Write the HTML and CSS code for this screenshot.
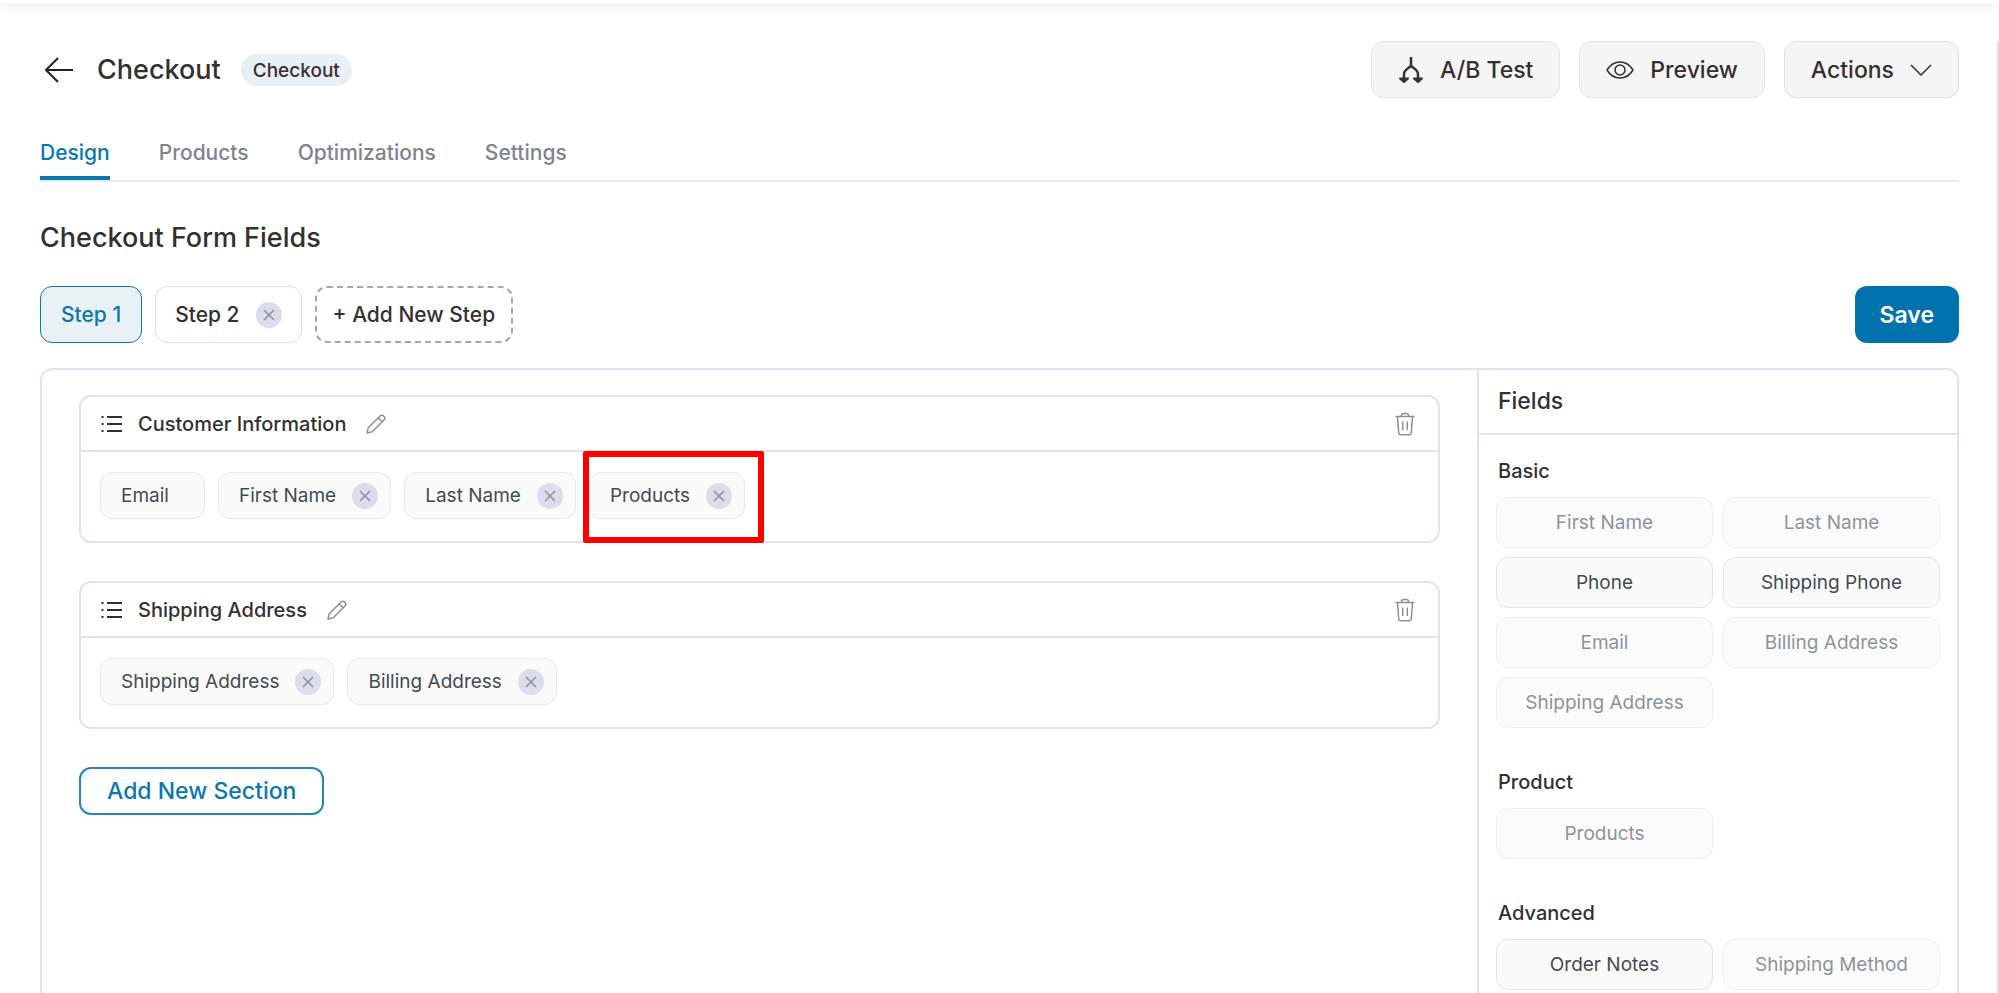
FILE: index.html
```html
<!DOCTYPE html>
<html lang="en">
<head>
<meta charset="UTF-8">
<meta name="viewport" content="width=device-width, initial-scale=1.0">
<title>Checkout</title>
<link rel="stylesheet" href="styles.css">
</head>
<body>
    <svg class="sprite" aria-hidden="true">
        <symbol id="close" viewBox="0 0 12 12"><path d="M1 1l10 10M11 1L1 11"/></symbol>
        <symbol id="list" viewBox="0 0 22 18">
            <path d="M6 2h15M6 9h15M6 16h15"/>
            <path d="M0.5 2h2M0.5 9h2M0.5 16h2"/>
        </symbol>
        <symbol id="pencil" viewBox="0 0 20 20">
            <path d="M1 19l1.200-5.200L13.800 2.200a2.800 2.800 0 0 1 4 4L6.200 17.800zM12.200 3.800l4 4"/>
        </symbol>
        <symbol id="trash" viewBox="0 0 20 24">
            <path d="M0.500 4.500h19M6.500 4.500V3.500a2 2 0 0 1 2-2h3a2 2 0 0 1 2 2v1M2.500 4.500l1.200 16a2.500 2.500 0 0 0 2.500 2.300h7.600a2.500 2.500 0 0 0 2.500-2.300l1.200-16M7.700 9.500v8.500M12.300 9.500v8.500"/>
        </symbol>
    </svg>

    <div class="topbar"></div>
    <div class="page">
        <header class="header">
            <button type="button" class="back" aria-label="Back">
                <svg width="30" height="26" viewBox="0 0 30 26"><path d="M29 13H2M14 1L2 13l12 12"/></svg>
            </button>
            <h1>Checkout</h1>
            <span class="badge">Checkout</span>
            <div class="actions">
                <button type="button" class="btn">
                    <svg class="icon-split" width="26" height="28" viewBox="0 0 26 28">
                        <path d="M13 1v9M13 9.500c-1 2.500-7 3.500-7 8.500v7M13 9.500c1 2.500 7 3.500 7 8.500v7"/>
                        <path d="M2 22.500L6 26l4-3.500zM16 22.500L20 26l4-3.500z"/>
                    </svg>
                    A/B Test
                </button>
                <button type="button" class="btn">
                    <svg width="28" height="20" viewBox="0 0 28 20">
                        <path d="M1 10C4 5 8.500 2 14 2s10 3 13 8c-3 5-7.500 8-13 8S4 15 1 10z"/>
                        <circle cx="14" cy="10" r="5"/>
                    </svg>
                    Preview
                </button>
                <button type="button" class="btn btn-menu">
                    Actions
                    <svg width="22" height="12" viewBox="0 0 22 12"><path d="M1 1l10 10L21 1"/></svg>
                </button>
            </div>
        </header>

        <nav class="tabs">
            <a href="#design" class="active">Design</a>
            <a href="#products">Products</a>
            <a href="#optimizations">Optimizations</a>
            <a href="#settings">Settings</a>
        </nav>

        <h2>Checkout Form Fields</h2>

        <div class="steps">
            <button type="button" class="step current">Step 1</button>
            <div class="step">
                Step 2
                <button type="button" class="remove" aria-label="Remove Step 2"><svg><use href="#close"/></svg></button>
            </div>
            <button type="button" class="step add-step">+ Add New Step</button>
            <button type="button" class="save">Save</button>
        </div>

        <div class="builder">
            <main class="sections">
                <section class="section">
                    <div class="section-head">
                        <svg class="icon-list"><use href="#list"/></svg>
                        <h3>Customer Information</h3>
                        <button type="button" class="icon-btn" aria-label="Edit"><svg class="icon-pencil"><use href="#pencil"/></svg></button>
                        <button type="button" class="icon-btn delete" aria-label="Delete"><svg class="icon-trash"><use href="#trash"/></svg></button>
                    </div>
                    <div class="chips">
                        <div class="chip locked">Email</div>
                        <div class="chip">First Name
                            <button type="button" class="remove" aria-label="Remove First Name"><svg><use href="#close"/></svg></button>
                        </div>
                        <div class="chip">Last Name
                            <button type="button" class="remove" aria-label="Remove Last Name"><svg><use href="#close"/></svg></button>
                        </div>
                        <div class="chip highlight">Products
                            <button type="button" class="remove" aria-label="Remove Products"><svg><use href="#close"/></svg></button>
                        </div>
                    </div>
                </section>

                <section class="section">
                    <div class="section-head">
                        <svg class="icon-list"><use href="#list"/></svg>
                        <h3>Shipping Address</h3>
                        <button type="button" class="icon-btn" aria-label="Edit"><svg class="icon-pencil"><use href="#pencil"/></svg></button>
                        <button type="button" class="icon-btn delete" aria-label="Delete"><svg class="icon-trash"><use href="#trash"/></svg></button>
                    </div>
                    <div class="chips">
                        <div class="chip">Shipping Address
                            <button type="button" class="remove" aria-label="Remove Shipping Address"><svg><use href="#close"/></svg></button>
                        </div>
                        <div class="chip">Billing Address
                            <button type="button" class="remove" aria-label="Remove Billing Address"><svg><use href="#close"/></svg></button>
                        </div>
                    </div>
                </section>

                <button type="button" class="add-section">Add New Section</button>
            </main>

            <aside class="fields">
                <h3 class="fields-title">Fields</h3>
                <div class="group">
                    <h4>Basic</h4>
                    <div class="field-grid">
                        <button type="button" disabled>First Name</button>
                        <button type="button" disabled>Last Name</button>
                        <button type="button">Phone</button>
                        <button type="button">Shipping Phone</button>
                        <button type="button" disabled>Email</button>
                        <button type="button" disabled>Billing Address</button>
                        <button type="button" disabled>Shipping Address</button>
                    </div>
                </div>
                <div class="group">
                    <h4>Product</h4>
                    <div class="field-grid">
                        <button type="button" disabled>Products</button>
                    </div>
                </div>
                <div class="group">
                    <h4>Advanced</h4>
                    <div class="field-grid">
                        <button type="button">Order Notes</button>
                        <button type="button" disabled>Shipping Method</button>
                    </div>
                </div>
            </aside>
        </div>
    </div>
</body>
</html>
```

FILE: styles.css
```css
* {
    box-sizing: border-box;
}

body {
    margin: 0;
    height: 100vh;
    overflow: hidden;
    display: flex;
    flex-direction: column;
    font-family: Inter, "Liberation Sans", sans-serif;
    font-size: 19px;
    color: #353030;
    background-color: #fff;
}

h1, h2, h3, h4 {
    margin: 0;
    font-weight: 500;
}

button {
    font: inherit;
    color: inherit;
    padding: 0;
    background: none;
    border: none;
    cursor: pointer;
}

svg {
    display: block;
    flex: none;
    fill: none;
    stroke: currentColor;
    stroke-width: 1.5;
    stroke-linejoin: round;
}

.sprite {
    position: absolute;
    width: 0;
    height: 0;
}

.topbar {
    flex: none;
    height: 3px;
    background-color: #fff;
    box-shadow: 0 1px 10px rgba(0, 0, 0, 0.18);
}

.page {
    flex: 1;
    min-height: 0;
    display: flex;
    flex-direction: column;
    margin-top: 38px;
    padding: 0 38px 0 40px;
    border-right: 2px solid #e2e2e4;
}

.header {
    display: flex;
    align-items: center;
}

.back {
    margin: 0 23px 0 4px;
    color: #222;
}

.back svg {
    stroke-width: 2;
}

h1, h2 {
    font-size: 27px;
    line-height: 34px;
}

.badge {
    margin-left: 20px;
    padding: 5px 12px 3px;
    line-height: 24px;
    font-weight: 500;
    border-radius: 16px;
    background-color: #eaeff3;
}

.actions {
    display: flex;
    gap: 19px;
    margin-left: auto;
}

.btn {
    display: flex;
    align-items: center;
    gap: 16px;
    height: 57px;
    padding: 0 26px;
    font-size: 23px;
    font-weight: 500;
    border: 1px solid #e6e6e8;
    border-radius: 12px;
    background-color: #f5f5f5;
}

.btn-menu {
    border-color: #dedcec;
}

.icon-split {
    stroke-width: 2.5;
}

.icon-split path:last-child {
    fill: currentColor;
    stroke-width: 2;
}

.tabs {
    display: flex;
    gap: 49px;
    margin-top: 42px;
    border-bottom: 2px solid #e8e8f0;
}

.tabs a {
    padding-bottom: 10px;
    font-size: 21px;
    font-weight: 500;
    line-height: 26px;
    color: #82828f;
    text-decoration: none;
    border-bottom: 4px solid transparent;
}

.tabs .active {
    color: #0a78ae;
    border-color: #0a78ae;
}

h2 {
    margin-top: 39px;
}

.steps {
    display: flex;
    gap: 13px;
    margin-top: 31px;
}

.step {
    display: flex;
    align-items: center;
    gap: 16px;
    height: 57px;
    padding: 0 19px;
    font-size: 21px;
    font-weight: 500;
    border: 1px solid #e0dfec;
    border-radius: 12px;
}

.current {
    padding: 0 20px;
    color: #0a78ae;
    border-color: #0a78ae;
    background-color: #e8f1f5;
}

.add-step {
    padding: 0 16px;
    border: 2px dashed #a6a6b0;
}

.save {
    height: 57px;
    margin-left: auto;
    padding: 0 25px;
    font-size: 23px;
    font-weight: 600;
    color: #fff;
    border-radius: 12px;
    background-color: #0272ad;
}

.remove {
    display: flex;
    align-items: center;
    justify-content: center;
    width: 26px;
    height: 26px;
    color: #8f8e9c;
    border-radius: 50%;
    background-color: #dddcea;
}

.remove svg {
    width: 12px;
    height: 12px;
}

.builder {
    flex: 1;
    min-height: 0;
    display: flex;
    margin-top: 25px;
    border: 2px solid #e3e2ee;
    border-bottom: none;
    border-radius: 12px 12px 0 0;
}

.sections {
    flex: 1;
    padding: 25px 37px;
}

.section {
    margin-bottom: 38px;
    border: 2px solid #e3e2ee;
    border-radius: 12px;
}

.section-head {
    display: flex;
    align-items: center;
    height: 55px;
    padding: 0 23px 0 20px;
    border-bottom: 2px solid #e3e2ee;
}

.section-head h3 {
    margin: 0 20px 0 15px;
    font-size: 20px;
}

.icon-list {
    width: 22px;
    height: 18px;
    stroke-width: 2;
}

.icon-btn {
    color: #8f8f9a;
}

.icon-pencil {
    width: 20px;
    height: 20px;
}

.icon-trash {
    width: 20px;
    height: 24px;
}

.delete {
    margin-left: auto;
}

.chips {
    display: flex;
    flex-wrap: wrap;
    gap: 13px;
    padding: 20px 19px 22px;
}

.chip {
    position: relative;
    display: flex;
    align-items: center;
    gap: 16px;
    height: 47px;
    padding: 0 12px 0 20px;
    color: #434a54;
    border: 1px solid #e8e8ea;
    border-radius: 12px;
    background-color: #fafafa;
}

.locked {
    padding-right: 35px;
}

/* frame around the chip being pointed out */
.highlight::after {
    content: "";
    position: absolute;
    inset: -22px -20px -25px -7px;
    border: 6px solid #f00;
    border-radius: 2px;
}

.add-section {
    height: 48px;
    padding: 0 26px;
    font-size: 23px;
    font-weight: 500;
    color: #0a78ae;
    border: 2px solid #2386b8;
    border-radius: 12px;
}

.fields {
    width: 480px;
    flex: none;
    border-left: 2px solid #e3e2ee;
}

.fields-title {
    padding: 0 19px;
    font-size: 23px;
    line-height: 63px;
    border-bottom: 2px solid #e3e2ee;
}

.group {
    padding: 23px 17px 0;
}

.group + .group {
    padding-top: 41px;
}

.group h4 {
    padding-left: 2px;
    font-size: 20px;
    line-height: 26px;
}

.field-grid {
    display: grid;
    grid-template-columns: 1fr 1fr;
    gap: 9px 10px;
    margin-top: 13px;
}

.field-grid button {
    height: 51px;
    color: #434a54;
    border: 1px solid #e4e4e6;
    border-radius: 12px;
    background-color: #fafafa;
}

.field-grid button:disabled {
    opacity: 0.6;
    cursor: default;
}
```
